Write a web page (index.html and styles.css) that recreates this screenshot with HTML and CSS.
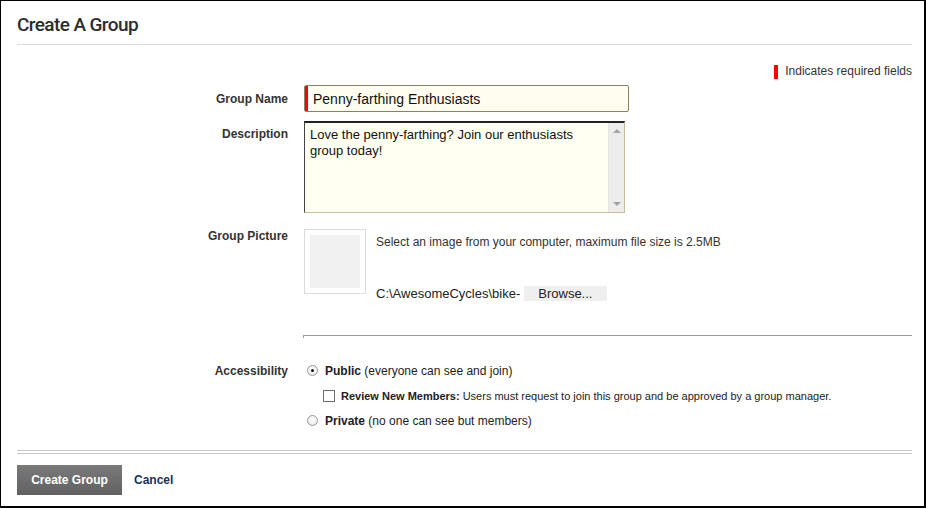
FILE: index.html
```html
<!DOCTYPE html>
<html>
<head>
<meta charset="utf-8">
<link rel="stylesheet" href="styles.css">
</head>
<body>
<div class="frame">
  <header class="head">
    <h1 class="title">Create A Group</h1>
  </header>
  <div class="required"><span class="req-bar"></span>Indicates required fields</div>
  <form class="form">
    <div class="label label-mid">Group Name</div>
    <div class="field">
      <div class="name-input"><span class="req-mark"></span><span class="name-text">Penny-farthing Enthusiasts</span></div>
    </div>

    <div class="label label-desc">Description</div>
    <div class="field">
      <div class="textarea">
        <div class="ta-text">Love the penny-farthing? Join our enthusiasts group today!</div>
        <div class="scrollbar"><span class="arrow-up"></span><span class="arrow-down"></span></div>
      </div>
    </div>

    <div class="label label-pic">Group Picture</div>
    <div class="field pic-field">
      <div class="pic-box"><div class="pic-inner"></div></div>
      <div class="pic-info">
        <div class="pic-hint">Select an image from your computer, maximum file size is 2.5MB</div>
        <div class="file-row"><span class="file-name">C:\AwesomeCycles\bike-</span><span class="browse">Browse...</span></div>
      </div>
    </div>

    <div class="spacer"></div>
    <div class="field"><div class="sep"></div></div>

    <div class="label label-acc">Accessibility</div>
    <div class="field acc">
      <div class="opt"><span class="radio checked"></span><span><b>Public</b> (everyone can see and join)</span></div>
      <div class="opt sub"><span class="check"></span><span><b>Review New Members:</b> Users must request to join this group and be approved by a group manager.</span></div>
      <div class="opt"><span class="radio"></span><span><b>Private</b> (no one can see but members)</span></div>
    </div>
  </form>
  <div class="footer-line"></div>
  <div class="actions">
    <span class="btn">Create Group</span>
    <span class="cancel">Cancel</span>
  </div>
</div>
</body>
</html>
```
FILE: styles.css
```css
* { box-sizing: border-box; }
html, body { margin: 0; padding: 0; background: #fff; }
body { font-family: "Liberation Sans", Arial, sans-serif; color: #333; }

.frame {
  width: 926px;
  height: 508px;
  border-style: solid;
  border-color: #000;
  border-width: 1px 2px 2px 1px;
  padding: 0 12px 0 16px;
}

.head {
  padding-top: 12px;
  border-bottom: 1px solid #dcdcdc;
  height: 44px;
}
.title {
  margin: 0;
  font-family: Roboto, "Liberation Sans", sans-serif;
  font-weight: 500;
  font-size: 19px;
  line-height: 24px;
  letter-spacing: -0.6px;
  color: #2d2d2d;
}

.required {
  margin-top: 19px;
  display: flex;
  justify-content: flex-end;
  align-items: center;
  font-size: 12px;
  line-height: 15px;
  color: #333;
}
.req-bar {
  display: inline-block;
  width: 4px;
  height: 14px;
  background: #f00;
  margin-right: 7px;
}

.form {
  display: grid;
  grid-template-columns: 271px 1fr;
  column-gap: 16px;
  margin-top: 6px;
}
.label {
  text-align: right;
  font-weight: bold;
  font-size: 12px;
  line-height: 14px;
  color: #333;
}
.label-mid { align-self: center; }
.label-desc { padding-top: 15px; }
.label-pic { padding-top: 1px; margin-top: 15px; }
.label-acc { padding-top: 2px; margin-top: 24px; }

.name-input {
  width: 325px;
  height: 27px;
  border: 1px solid #8a8162;
  border-radius: 2px;
  background: #fffdf0;
  display: flex;
  align-items: center;
  overflow: hidden;
}
.req-mark {
  width: 4px;
  height: 100%;
  background: #f00;
  margin-left: -1px;
}
.name-text {
  padding-left: 5px;
  font-size: 14px;
  color: #111;
}

.textarea {
  margin-top: 9px;
  width: 321px;
  height: 92px;
  display: flex;
  border-style: solid;
  border-width: 2px 1px 1px 1px;
  border-color: #222 #c6bd9e #c6bd9e #444;
  background: #fffff2;
}
.ta-text {
  flex: 1;
  padding: 4px 5px;
  font-size: 13px;
  line-height: 16px;
  color: #111;
}
.scrollbar {
  width: 16px;
  background: #ededed;
  border-left: 1px solid #e4e4e4;
  position: relative;
}
.arrow-up, .arrow-down {
  position: absolute;
  left: 4px;
  width: 0; height: 0;
  border-left: 4px solid transparent;
  border-right: 4px solid transparent;
}
.arrow-up { top: 6px; border-bottom: 4px solid #a3a3a3; }
.arrow-down { bottom: 6px; border-top: 4px solid #a3a3a3; }

.pic-field {
  margin-top: 16px;
  display: flex;
}
.pic-box {
  width: 62px;
  height: 65px;
  border: 1px solid #dcdcdc;
  padding: 5px;
  background: #fff;
}
.pic-inner { width: 100%; height: 100%; background: #f0f0f0; }
.pic-info {
  margin-left: 10px;
  font-size: 12px;
  color: #333;
}
.pic-hint { line-height: 14px; margin-top: 6px; }
.file-row {
  margin-top: 37px;
  display: flex;
  align-items: center;
  line-height: 15px;
  font-size: 13px;
}
.file-name { color: #222; }
.browse {
  margin-left: 4px;
  background: #efefef;
  padding: 0 0 0 14px;
  height: 15px;
  line-height: 15px;
  width: 83px;
  color: #222;
}

.spacer { height: 1px; }
.sep {
  margin-top: 34px;
  margin-left: -1px;
  height: 3px;
  border-top: 1px solid #9c9c9c;
  border-left: 1px solid #9c9c9c;
}
.acc { margin-top: 20px; font-size: 12px; color: #222; }
.opt {
  display: flex;
  align-items: center;
  height: 25px;
  line-height: 14px;
}
.opt.sub { padding-left: 15px; font-size: 11px; }
.opt b { color: #222; }

.radio {
  width: 11px;
  height: 11px;
  border-radius: 50%;
  border: 1px solid #9a9a9a;
  background: radial-gradient(circle at 50% 40%, #fff 0, #f0f0f0 60%, #dcdcdc 100%);
  margin: 0 7px 0 3px;
  position: relative;
  flex: none;
}
.radio.checked::after {
  content: "";
  position: absolute;
  left: 3px; top: 3px;
  width: 3px; height: 3px;
  border-radius: 50%;
  background: #111;
}
.check {
  width: 12px;
  height: 12px;
  border: 1px solid #6e6e6e;
  background: #fff;
  margin: 0 6px 0 4px;
  flex: none;
}

.footer-line {
  margin-top: 17px;
  height: 4px;
  border-top: 1px solid #c8c8c8;
  border-bottom: 1px solid #c8c8c8;
}
.actions {
  margin-top: 11px;
  display: flex;
  align-items: center;
}
.btn {
  display: inline-block;
  width: 105px;
  height: 30px;
  line-height: 30px;
  text-align: center;
  background: linear-gradient(#7a7a7a, #616161);
  color: #fff;
  font-weight: bold;
  font-size: 12px;
}
.cancel {
  margin-left: 12px;
  font-weight: bold;
  font-size: 12px;
  color: #16325c;
}
```
